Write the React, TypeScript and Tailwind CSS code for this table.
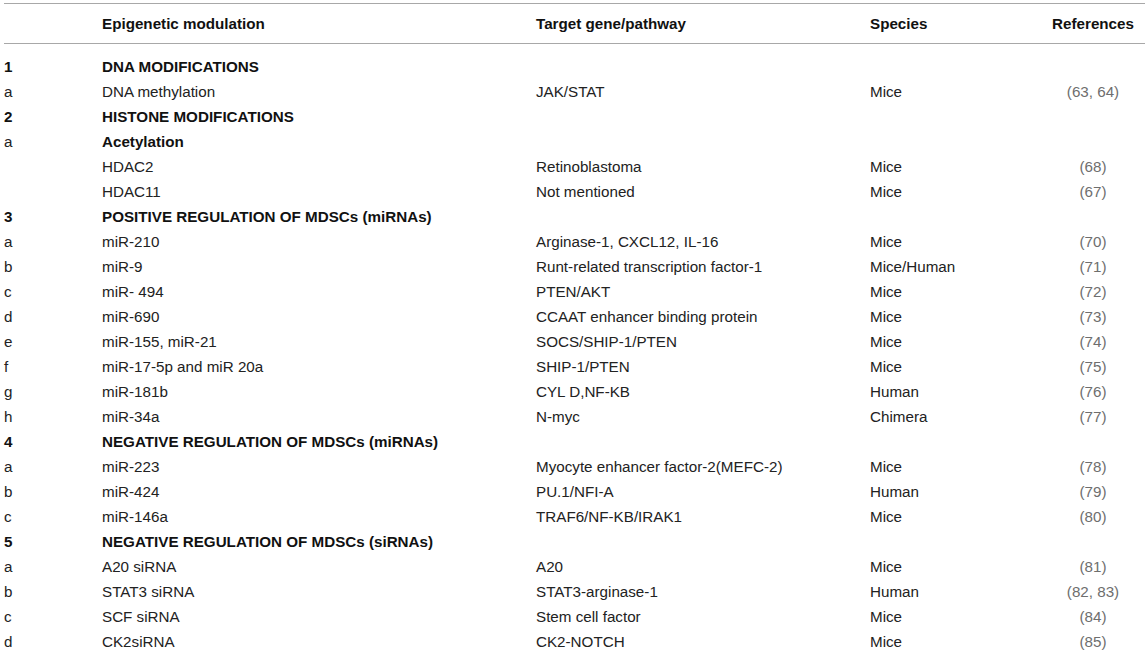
import React from "react";

type Row = {
  n: string;
  mod: string;
  target?: string;
  species?: string;
  refs?: string;
  boldN?: boolean;
  boldMod?: boolean;
};

const rows: Row[] = [
  { n: "1", mod: "DNA MODIFICATIONS", boldN: true, boldMod: true },
  { n: "a", mod: "DNA methylation", target: "JAK/STAT", species: "Mice", refs: "(63, 64)" },
  { n: "2", mod: "HISTONE MODIFICATIONS", boldN: true, boldMod: true },
  { n: "a", mod: "Acetylation", boldMod: true },
  { n: "", mod: "HDAC2", target: "Retinoblastoma", species: "Mice", refs: "(68)" },
  { n: "", mod: "HDAC11", target: "Not mentioned", species: "Mice", refs: "(67)" },
  { n: "3", mod: "POSITIVE REGULATION OF MDSCs (miRNAs)", boldN: true, boldMod: true },
  { n: "a", mod: "miR-210", target: "Arginase-1, CXCL12, IL-16", species: "Mice", refs: "(70)" },
  { n: "b", mod: "miR-9", target: "Runt-related transcription factor-1", species: "Mice/Human", refs: "(71)" },
  { n: "c", mod: "miR- 494", target: "PTEN/AKT", species: "Mice", refs: "(72)" },
  { n: "d", mod: "miR-690", target: "CCAAT enhancer binding protein", species: "Mice", refs: "(73)" },
  { n: "e", mod: "miR-155, miR-21", target: "SOCS/SHIP-1/PTEN", species: "Mice", refs: "(74)" },
  { n: "f", mod: "miR-17-5p and miR 20a", target: "SHIP-1/PTEN", species: "Mice", refs: "(75)" },
  { n: "g", mod: "miR-181b", target: "CYL D,NF-KB", species: "Human", refs: "(76)" },
  { n: "h", mod: "miR-34a", target: "N-myc", species: "Chimera", refs: "(77)" },
  { n: "4", mod: "NEGATIVE REGULATION OF MDSCs (miRNAs)", boldN: true, boldMod: true },
  { n: "a", mod: "miR-223", target: "Myocyte enhancer factor-2(MEFC-2)", species: "Mice", refs: "(78)" },
  { n: "b", mod: "miR-424", target: "PU.1/NFI-A", species: "Human", refs: "(79)" },
  { n: "c", mod: "miR-146a", target: "TRAF6/NF-KB/IRAK1", species: "Mice", refs: "(80)" },
  { n: "5", mod: "NEGATIVE REGULATION OF MDSCs (siRNAs)", boldN: true, boldMod: true },
  { n: "a", mod: "A20 siRNA", target: "A20", species: "Mice", refs: "(81)" },
  { n: "b", mod: "STAT3 siRNA", target: "STAT3-arginase-1", species: "Human", refs: "(82, 83)" },
  { n: "c", mod: "SCF siRNA", target: "Stem cell factor", species: "Mice", refs: "(84)" },
  { n: "d", mod: "CK2siRNA", target: "CK2-NOTCH", species: "Mice", refs: "(85)" },
];

const cols = "grid grid-cols-[98px_434px_334px_181px_84px]";

export default function App() {
  return (
    <div
      className="w-[1145px] h-[655px] bg-white pt-[3px] pl-[4px] overflow-hidden text-[15.2px] leading-[25px] text-[#222]"
      style={{ fontFamily: '"Liberation Sans", Arial, Helvetica, sans-serif' }}
    >
      <div className="border-t border-b border-[#a8a8a8]">
        <div className={`${cols} h-[39px] items-center font-bold text-[#111]`}>
          <div />
          <div>Epigenetic modulation</div>
          <div>Target gene/pathway</div>
          <div>Species</div>
          <div className="text-center whitespace-nowrap">References</div>
        </div>
      </div>
      <div className="pt-[10px]">
        {rows.map((r, i) => (
          <div key={i} className={`${cols} h-[25px] items-center whitespace-nowrap`}>
            <div className={r.boldN ? "font-bold text-[#111]" : ""}>{r.n}</div>
            <div className={r.boldMod ? "font-bold text-[#111]" : ""}>{r.mod}</div>
            <div>{r.target ?? ""}</div>
            <div>{r.species ?? ""}</div>
            <div className="text-center text-[#6e6e6e]">{r.refs ?? ""}</div>
          </div>
        ))}
      </div>
    </div>
  );
}
